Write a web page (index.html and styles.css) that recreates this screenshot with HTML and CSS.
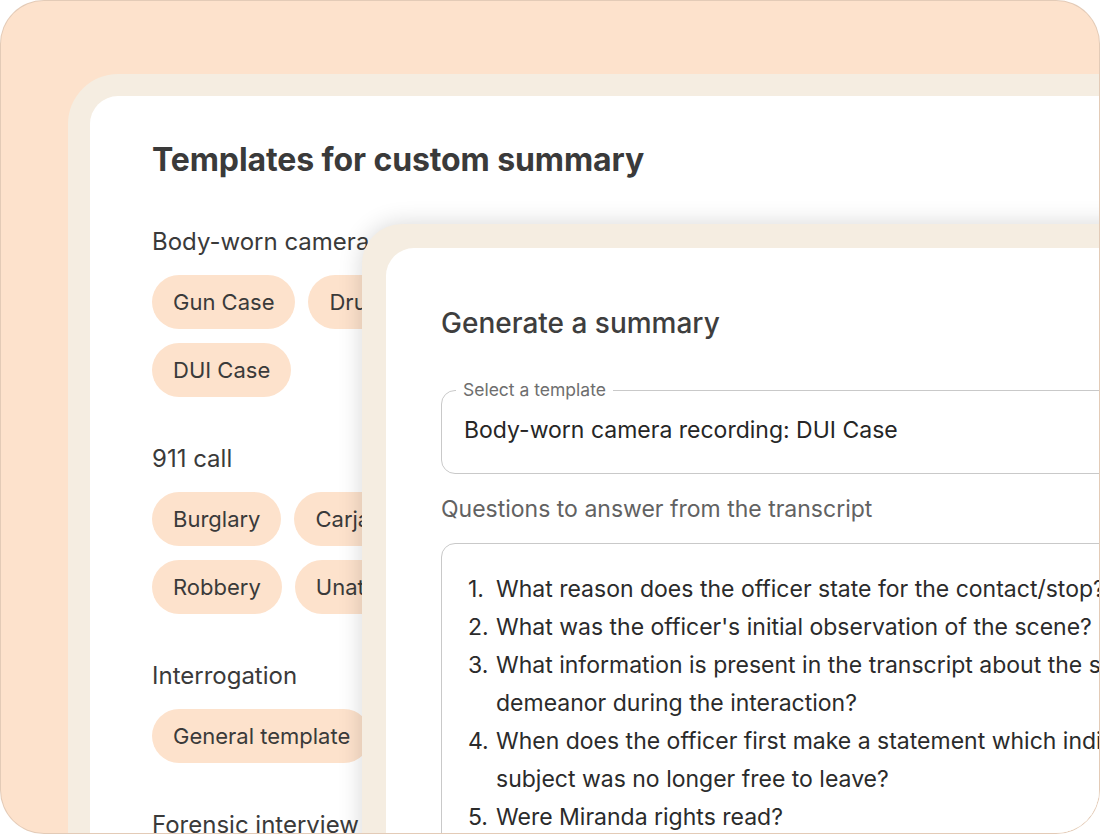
FILE: index.html
```html
<!DOCTYPE html>
<html lang="en">
<head>
<meta charset="utf-8">
<title>Templates for custom summary</title>
<link rel="stylesheet" href="styles.css">
</head>
<body>
<div class="frame">
  <section class="panel">
    <div class="panel-inner">
      <h1 class="title">Templates for custom summary</h1>

      <div class="group">
        <h2 class="group-label">Body-worn camera recording</h2>
        <div class="chips">
          <span class="chip">Gun Case</span>
          <span class="chip">Drug Case</span>
          <span class="chip">DUI Case</span>
        </div>
      </div>

      <div class="group">
        <h2 class="group-label">911 call</h2>
        <div class="chips">
          <span class="chip">Burglary</span>
          <span class="chip">Carjacking</span>
          <span class="chip">Robbery</span>
          <span class="chip">Unattended death</span>
        </div>
      </div>

      <div class="group">
        <h2 class="group-label">Interrogation</h2>
        <div class="chips">
          <span class="chip">General template</span>
        </div>
      </div>

      <div class="group">
        <h2 class="group-label">Forensic interview</h2>
        <div class="chips">
          <span class="chip">General template</span>
        </div>
      </div>
    </div>
  </section>

  <section class="dialog">
    <div class="dialog-inner">
      <h2 class="dialog-title">Generate a summary</h2>

      <fieldset class="select">
        <legend class="select-label">Select a template</legend>
        <div class="select-value">Body-worn camera recording: DUI Case</div>
      </fieldset>

      <p class="field-label">Questions to answer from the transcript</p>

      <div class="textarea">
        <ol class="questions">
          <li><span class="num">1.</span><span>What reason does the officer state for the contact/stop?</span></li>
          <li><span class="num">2.</span><span>What was the officer's initial observation of the scene?</span></li>
          <li><span class="num">3.</span><span>What information is present in the transcript about the subject's<br>demeanor during the interaction?</span></li>
          <li><span class="num">4.</span><span>When does the officer first make a statement which indicates the<br>subject was no longer free to leave?</span></li>
          <li><span class="num">5.</span><span>Were Miranda rights read?</span></li>
          <li><span class="num">6.</span><span>Was a field sobriety test administered?</span></li>
        </ol>
      </div>
    </div>
  </section>
</div>
</body>
</html>
```

FILE: styles.css
```css
* {
  box-sizing: border-box;
}

html, body {
  margin: 0;
  padding: 0;
  background: #ffffff;
}

body {
  width: 1100px;
  height: 834px;
  overflow: hidden;
  font-family: Inter, "Noto Sans", "Liberation Sans", sans-serif;
  color: #3b3b3b;
}

.frame {
  position: relative;
  width: 1100px;
  height: 834px;
  background: #fde2cc;
  border: 1px solid rgba(0, 0, 0, 0.1);
  border-radius: 44px;
  overflow: hidden;
  padding: 73px 0 0 67px;
}

.panel {
  width: 1100px;
  height: 900px;
  background: #f5ede1;
  border-radius: 50px 0 0 0;
  padding: 22px 0 0 22px;
}

.panel-inner {
  height: 100%;
  background: #ffffff;
  border-radius: 28px 0 0 0;
  padding: 45px 0 0 62px;
}

.title {
  margin: 0 0 48px;
  font-size: 32px;
  line-height: 38px;
  font-weight: 700;
  color: #3a3a3a;
  letter-spacing: -0.1px;
}

.group {
  margin-bottom: 47px;
}

.group-label {
  margin: 0 0 18px;
  font-size: 24px;
  line-height: 30px;
  font-weight: 400;
  color: #3a3a3a;
}

.chips {
  display: flex;
  flex-wrap: wrap;
  gap: 14px 13px;
  max-width: 420px;
}

.chip {
  display: inline-flex;
  align-items: center;
  height: 54px;
  padding: 0 21px;
  border-radius: 27px;
  background: #fde2cc;
  font-size: 22px;
  color: #3a3a3a;
  white-space: nowrap;
}

.dialog {
  position: absolute;
  left: 361px;
  top: 223px;
  width: 820px;
  height: 700px;
  background: #f5ede1;
  border-radius: 40px 0 0 0;
  padding: 24px 0 0 24px;
  box-shadow: 0 0 24px rgba(0, 0, 0, 0.16);
}

.dialog-inner {
  height: 100%;
  background: #ffffff;
  border-radius: 28px 0 0 0;
  padding: 58px 0 0 55px;
}

.dialog-title {
  margin: 0 0 40px;
  font-size: 28px;
  line-height: 34px;
  font-weight: 500;
  color: #3e3e3e;
}

.select {
  margin: 0;
  width: 760px;
  border: 1px solid #c9c9c9;
  border-radius: 14px;
  padding: 0 14px;
}

.select-label {
  padding: 0 7px;
  font-size: 17.5px;
  line-height: 20px;
  color: #6e6e6e;
}

.select-value {
  padding: 15px 0 28px 8px;
  font-size: 23px;
  line-height: 30px;
  color: #262626;
  white-space: nowrap;
}

.field-label {
  margin: 20px 0 19px;
  font-size: 23px;
  line-height: 30px;
  color: #626262;
}

.textarea {
  width: 760px;
  border: 1px solid #c9c9c9;
  border-radius: 14px;
  padding: 26px 0 0 26px;
  height: 400px;
}

.questions {
  list-style: none;
  margin: 0;
  padding: 0;
  font-size: 23px;
  line-height: 38px;
  color: #2b2b2b;
}

.questions li {
  display: flex;
  white-space: nowrap;
}

.num {
  flex: none;
  width: 28px;
}
```
